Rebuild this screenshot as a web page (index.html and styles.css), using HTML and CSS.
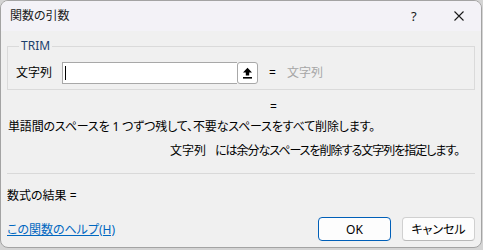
FILE: index.html
```html
<!DOCTYPE html>
<html lang="ja">
<head>
<meta charset="utf-8">
<link rel="stylesheet" href="styles.css">
</head>
<body>
<div class="window">
  <div class="titlebar">
    <span class="title">関数の引数</span>
    <span class="help">?</span>
    <span class="close">
      <svg width="10" height="10" viewBox="0 0 10 10"><path d="M0.5 0.5 L9.5 9.5 M9.5 0.5 L0.5 9.5" stroke="#1a1a1a" stroke-width="1.1" fill="none"/></svg>
    </span>
  </div>
  <div class="content">
    <fieldset class="group">
      <legend class="legend">TRIM</legend>
      <div class="argrow">
        <span class="arglabel">文字列</span>
        <div class="inputbox">
          <div class="field"><span class="caret"></span></div>
          <div class="refbtn">
            <svg width="11" height="12" viewBox="0 0 11 12"><path d="M5.5 0.8 L1 5.6 H3.8 V8.6 H7.2 V5.6 H10 Z" fill="#000"/><rect x="1" y="10" width="9" height="1.6" fill="#000"/></svg>
          </div>
        </div>
        <span class="eq">=</span>
        <span class="argvalue">文字列</span>
      </div>
    </fieldset>
    <div class="resulteq">=</div>
    <div class="desc">単語間のスペースを 1 つずつ残して、不要なスペースをすべて削除します。</div>
    <div class="argdesc"><span class="argname">文字列</span><span class="argtext">には余分なスペースを削除する文字列を指定します。</span></div>
    <div class="sep"></div>
    <div class="formula">数式の結果 =</div>
    <div class="footer">
      <a class="helplink" href="#">この関数のヘルプ(H)</a>
      <div class="buttons">
        <button class="btn primary">OK</button>
        <button class="btn">キャンセル</button>
      </div>
    </div>
  </div>
</div>
</body>
</html>
```
FILE: styles.css
```css
html, body {
  margin: 0;
  padding: 0;
}
body {
  width: 483px;
  height: 250px;
  background: #d4d4d4;
  font-family: "Noto Sans", "Noto Sans CJK JP", sans-serif;
  font-size: 12px;
  line-height: 16px;
  color: #000;
  font-feature-settings: "palt";
}
.window {
  box-sizing: border-box;
  width: 482px;
  height: 248px;
  border: 1px solid #a3a3a3;
  border-radius: 8px;
  overflow: hidden;
  background: #f0f0f0;
  display: flex;
  flex-direction: column;
}
.titlebar {
  height: 30px;
  flex: none;
  background: #f3f2f7;
  display: flex;
  align-items: center;
  padding-left: 9px;
}
.title {
  font-size: 12px;
  color: #1a1a1a;
  flex: 1;
}
.help {
  font-size: 13px;
  color: #1a1a1a;
  width: 10px;
  margin-right: 33px;
}
.close {
  display: flex;
  margin-right: 17px;
}
.content {
  flex: 1;
  display: flex;
  flex-direction: column;
  padding: 0 6px;
}
.group {
  margin: 7px 0 0 0;
  padding: 8px 8px 5px 8px;
  border: 1px solid #dadada;
  min-width: 0;
}
.legend {
  padding: 0 2px;
  margin-left: 3px;
  color: #1c3f6c;
  font-size: 12px;
  line-height: 16px;
}
.argrow {
  display: flex;
  align-items: center;
  height: 22px;
}
.arglabel {
  width: 46px;
  flex: none;
}
.inputbox {
  display: flex;
  width: 196px;
  height: 22px;
  flex: none;
}
.field {
  flex: 1;
  box-sizing: border-box;
  border: 1px solid #a8a8a8;
  border-right: none;
  background: #fff;
  display: flex;
  align-items: center;
}
.caret {
  width: 1px;
  height: 14px;
  background: #000;
  margin-left: 2px;
}
.refbtn {
  box-sizing: border-box;
  width: 21px;
  height: 22px;
  border: 1px solid #a8a8a8;
  border-radius: 3px;
  background: #fff;
  display: flex;
  align-items: center;
  justify-content: center;
}
.eq {
  margin-left: 11px;
  width: 18px;
}
.argvalue {
  color: #a6a6a6;
}
.resulteq {
  margin: 9px 0 0 263px;
}
.desc {
  margin-top: 4px;
  padding-left: 1px;
  white-space: nowrap;
  letter-spacing: -0.15px;
}
.argdesc {
  margin-top: 8px;
  padding-left: 163px;
  white-space: nowrap;
  display: flex;
}
.argname {
  width: 45px;
  flex: none;
}
.argtext {
  letter-spacing: -1px;
}
.sep {
  margin-top: 14px;
  height: 1px;
  background: #d9d9d9;
  margin-right: 0;
}
.formula {
  margin-top: 14px;
}
.footer {
  margin-top: 13px;
  display: flex;
  align-items: center;
  justify-content: space-between;
}
.helplink {
  color: #0067c0;
  text-decoration: underline;
  margin-top: 1px;
}
.buttons {
  display: flex;
  gap: 11px;
}
.btn {
  box-sizing: border-box;
  width: 73px;
  height: 24px;
  border: 1px solid #d0d0d0;
  border-bottom-color: #b8b8b8;
  border-radius: 4px;
  background: #fdfdfd;
  font-family: "Noto Sans", "Noto Sans CJK JP", sans-serif;
  font-feature-settings: "palt";
  font-size: 12px;
  color: #000;
  padding: 0;
}
.btn.primary {
  border-color: #005fb8;
}
```
